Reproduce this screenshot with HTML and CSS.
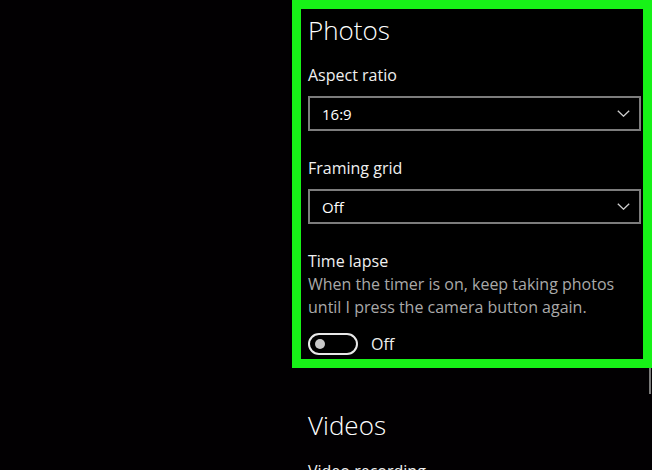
FILE: index.html
```html
<!DOCTYPE html>
<html lang="en">

<head>
    <meta charset="UTF-8">
    <meta name="viewport" content="width=device-width, initial-scale=1.0">
    <title>Camera Settings</title>
    <link rel="stylesheet" href="styles.css">
</head>

<body>

    <div class="page">
        <div class="side"></div>

        <div class="main">
            <div class="photos-panel">
                <h1 class="section-title">Photos</h1>

                <p class="label">Aspect ratio</p>
                <div class="dropdown">
                    <span>16:9</span>
                    <svg class="chevron" width="13" height="7" viewBox="0 0 13 7">
                        <polyline points="0.8,0.8 6.5,6.2 12.2,0.8" fill="none" stroke="#cfcfcf" stroke-width="1.3" />
                    </svg>
                </div>

                <p class="label spaced">Framing grid</p>
                <div class="dropdown">
                    <span>Off</span>
                    <svg class="chevron" width="13" height="7" viewBox="0 0 13 7">
                        <polyline points="0.8,0.8 6.5,6.2 12.2,0.8" fill="none" stroke="#cfcfcf" stroke-width="1.3" />
                    </svg>
                </div>

                <p class="label spaced">Time lapse</p>
                <p class="description">When the timer is on, keep taking photos until I press the camera button again.</p>

                <div class="toggle-row">
                    <div class="toggle">
                        <div class="knob"></div>
                    </div>
                    <span class="toggle-text">Off</span>
                </div>
            </div>

            <div class="videos">
                <h1 class="section-title">Videos</h1>
                <p class="label recording">Video recording</p>
            </div>
        </div>
    </div>

    <div class="scroll-thumb"></div>

</body>

</html>
```

FILE: styles.css
```css
body {
    margin: 0;
    padding: 0;
    background-color: #020002;
    font-family: "Open Sans", "Noto Sans", Arial, sans-serif;
    color: #f2f2f2;
    overflow: hidden;
}

.page {
    display: flex;
    height: 470px;
}

.side {
    width: 292px;
    flex-shrink: 0;
}

.main {
    flex: 1;
    display: flex;
    flex-direction: column;
}

.photos-panel {
    border: 9px solid #17f217;
    padding: 5px 2px 4px 7px;
    background-color: #000;
}

.section-title {
    margin: 0;
    font-size: 26px;
    line-height: 32px;
    font-weight: 300;
    color: #fff;
}

.label {
    margin: 18px 0 0 0;
    font-size: 16px;
    line-height: 22px;
    color: #f0f0f0;
}

.label.spaced {
    margin-top: 26px;
}

.dropdown {
    margin-top: 10px;
    height: 31px;
    border: 2px solid #7c7c7c;
    display: flex;
    align-items: center;
    justify-content: space-between;
    padding: 0 9px 0 12px;
    font-size: 15px;
    color: #fff;
}

.chevron {
    display: block;
}

.description {
    margin: 1px 0 0 0;
    font-size: 16px;
    line-height: 23px;
    color: #a9a9a9;
}

.toggle-row {
    margin-top: 14px;
    display: flex;
    align-items: center;
    gap: 13px;
}

.toggle {
    width: 46px;
    height: 18px;
    border: 2px solid #e8e8e8;
    border-radius: 12px;
    display: flex;
    align-items: center;
    padding-left: 5px;
    box-sizing: content-box;
    width: 41px;
}

.knob {
    width: 10px;
    height: 10px;
    border-radius: 50%;
    background-color: #c9c9c9;
}

.toggle-text {
    font-size: 16px;
    color: #f0f0f0;
}

.videos {
    padding-left: 16px;
    margin-top: 41px;
}

.label.recording {
    margin-top: 19px;
}

.scroll-thumb {
    position: absolute;
    right: 1px;
    top: 368px;
    width: 2px;
    height: 26px;
    background-color: #7a7a7a;
}
```
